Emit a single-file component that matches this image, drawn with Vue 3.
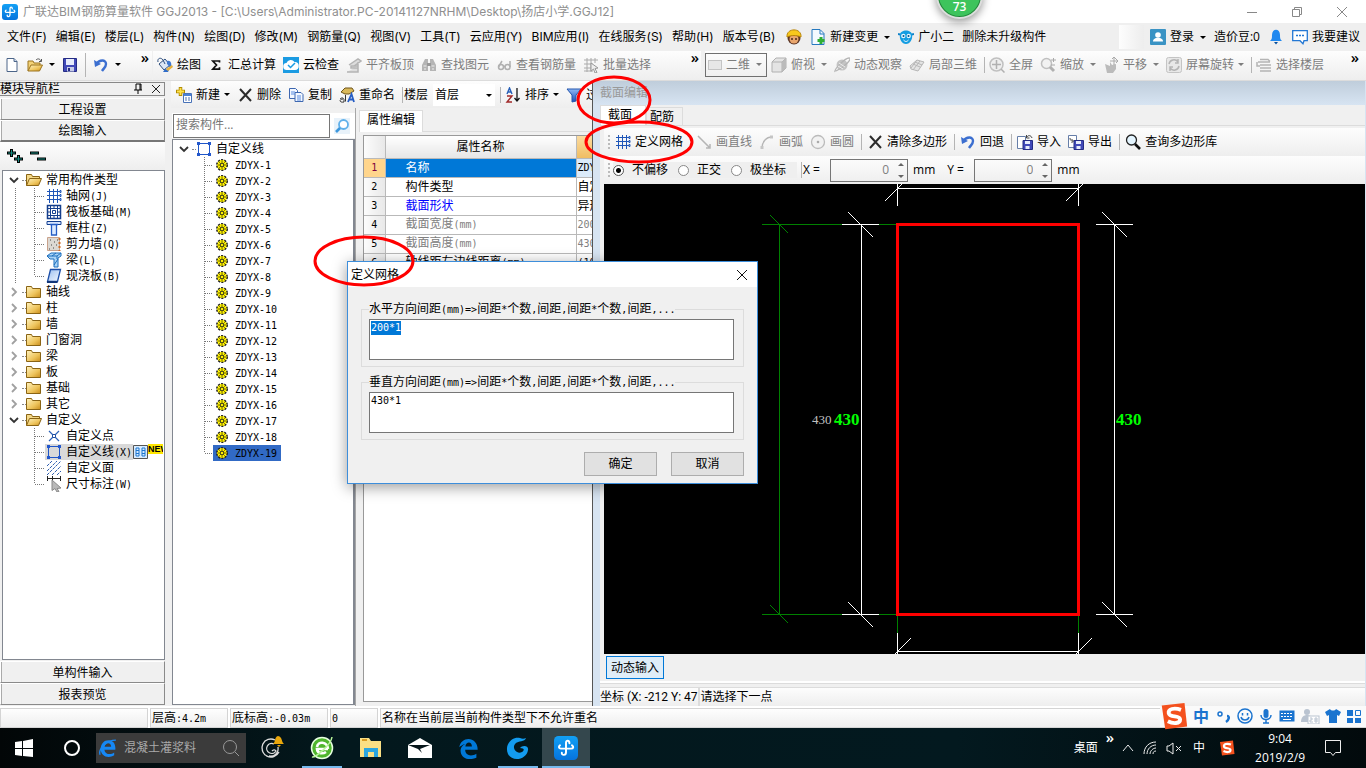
<script setup>
import { h, ref, onMounted } from 'vue'

const Ico = (p) => h('svg', { class: 'ico', 'aria-hidden': 'true', viewBox: '0 0 16 16' }, [h('use', { href: '#i-' + p.n })])
Ico.props = ['n']

// Half-width characters are set in a narrow monospace, full-width ones in the CJK face.
const Sim = (p) => h('span', { class: 'sim' }, (p.t.match(/[\x20-\x7e]+|[^\x20-\x7e]+/g) || []).map((s) =>
  /^[\x20-\x7e]/.test(s) ? h('span', { class: 'lat' }, s) : s))
Sim.props = ['t']

const menus = ['文件(F)', '编辑(E)', '楼层(L)', '构件(N)', '绘图(D)', '修改(M)', '钢筋量(Q)', '视图(V)', '工具(T)', '云应用(Y)', 'BIM应用(I)', '在线服务(S)', '帮助(H)', '版本号(B)']

const tools = [
  { i: 'bucket', t: '绘图' }, { i: 'sigma', t: '汇总计算' }, { i: 'cloud', t: '云检查' },
  { i: 'align', t: '平齐板顶', off: true }, { i: 'binoc', t: '查找图元', off: true },
  { i: 'glasses', t: '查看钢筋量', off: true }, { i: 'batch', t: '批量选择', off: true }
]
const views = [
  { i: 'cube', t: '俯视', a: 1 }, { i: 'planet', t: '动态观察' }, { i: 'local', t: '局部三维', s: 1 },
  { i: 'full', t: '全屏' }, { i: 'zoom', t: '缩放', a: 1 }, { i: 'pan', t: '平移', a: 1 },
  { i: 'rotate', t: '屏幕旋转', a: 2, s: 1 }, { i: 'floors', t: '选择楼层' }
]

const nav = [
  { t: '常用构件类型', open: true, kids: [
    { i: 'grid', t: '轴网(J)' }, { i: 'raft', t: '筏板基础(M)' }, { i: 'column', t: '框柱(Z)' },
    { i: 'wall', t: '剪力墙(Q)' }, { i: 'beam', t: '梁(L)' }, { i: 'slab', t: '现浇板(B)' }] },
  { t: '轴线' }, { t: '柱' }, { t: '墙' }, { t: '门窗洞' }, { t: '梁' }, { t: '板' }, { t: '基础' }, { t: '其它' },
  { t: '自定义', open: true, last: true, kids: [
    { i: 'point', t: '自定义点' }, { i: 'poly', t: '自定义线(X)', sel: true }, { i: 'hatch', t: '自定义面' }, { i: 'dim', t: '尺寸标注(W)' }] }
]

const props = [
  { n: '名称', v: 'ZDYX-19', c: 'cur' }, { n: '构件类型', v: '自定义线' }, { n: '截面形状', v: '异形', c: 'blue' },
  { n: '截面宽度(mm)', v: '200', c: 'dim' }, { n: '截面高度(mm)', v: '430', c: 'dim' }, { n: '轴线距左边线距离(mm)', v: '(100)' }
]

const offset = ref('none')
const hGap = ref('200*1')
const vGap = ref('430*1')
const first = ref(null)
onMounted(() => { first.value.focus({ preventScroll: true }); first.value.select() })
</script>

<template>
  <svg class="sprite" aria-hidden="true">
    <defs>
      <linearGradient id="gFold" x1="0" y1="0" x2="1" y2="1"><stop offset="0" stop-color="#fff3c0" /><stop offset=".6" stop-color="#eec45c" /><stop offset="1" stop-color="#c98d1c" /></linearGradient>
      <linearGradient id="gBlue" x1="0" y1="0" x2="0" y2="1"><stop offset="0" stop-color="#8fb8f5" /><stop offset="1" stop-color="#1c50b8" /></linearGradient>
      <linearGradient id="gSlab" x1="0" y1="0" x2="1" y2="1"><stop offset="0" stop-color="#9cc0f0" /><stop offset="1" stop-color="#f4f9ff" /></linearGradient>
      <linearGradient id="gApp" x1="0" y1="0" x2="0" y2="1"><stop offset="0" stop-color="#12a0f5" /><stop offset="1" stop-color="#0673dc" /></linearGradient>
    </defs>
    <symbol id="i-app" viewBox="0 0 16 16"><rect width="16" height="16" rx="3" fill="url(#gApp)" /><path d="M10.300 4.800C10.300 2.600 8 2.600 8 4.600v6.200c0 2.400-3 2.200-2.800.4M4 6.200c-1.200 1-.8 2.200.6 2.200h6.800c1.600 0 1.900-1.400.6-2.200" fill="none" stroke="#fff" stroke-width="1.300" stroke-linecap="round" /></symbol>
    <symbol id="i-new" viewBox="0 0 16 16"><path d="M3 1.500h7l3 3v10H3z" fill="#fff" stroke="#4c6589" /><path d="M10 1.500v3h3" fill="#cfdcf0" stroke="#4c6589" /></symbol>
    <symbol id="i-open" viewBox="0 0 16 16"><path d="M1 14V4h5l1 2h6v2" fill="#f3d277" stroke="#9b7420" /><path d="M1 14l3-6h11.500l-3 6z" fill="url(#gFold)" stroke="#9b7420" /><path d="M9 3c2-2 4-1 5 1M14.500 2v2.500H12" fill="none" stroke="#555" /></symbol>
    <symbol id="i-save" viewBox="0 0 16 16"><path d="M1.500 1.500h13v13h-13z" fill="#4149b8" stroke="#252c84" /><path d="M4 2h8v6H4z" fill="#e7ecfb" /><path d="M5 10h7v4.500H5z" fill="#c8cde6" /><path d="M6 11h2v3H6z" fill="#252c84" /></symbol>
    <symbol id="i-undo" viewBox="0 0 16 16"><path d="M4 6.500C6 3 13 2 13 7c0 3-2 4-4 7" fill="none" stroke="#3c6fd0" stroke-width="2.400" /><path d="M1 3l1 7 6-3z" fill="#3c6fd0" /></symbol>
    <symbol id="i-bucket" viewBox="0 0 16 16"><path d="M2 7l6-5 5 6-6 5z" fill="#dbe6f5" stroke="#30507f" /><path d="M1 5c-1-4 3-5 5-2l2 4" fill="none" stroke="#30507f" /><path d="M10 4c4-1 5 3 4 7-2 1-2-3-4-4z" fill="#3f78cf" /><path d="M6 15l2-3 4 1-1 2z" fill="#2f6cc9" /><path d="M9 12l6-4 1 2-5 4z" fill="#e8b23d" /></symbol>
    <symbol id="i-sigma" viewBox="0 0 16 16"><path d="M11.500 5.500V4H4.800l3.700 4-3.700 4.200h6.700v-2" fill="none" stroke="#111" stroke-width="1.700" /></symbol>
    <symbol id="i-cloud" viewBox="0 0 16 16"><rect width="16" height="16" fill="#1b9be2" /><path d="M4 13a3.500 3.500 0 0 1-.5-7 4.500 4.500 0 0 1 8-1 4 4 0 0 1 .5 8z" fill="#fff" /><path d="M5 8l2.500 2.500L12 6" fill="none" stroke="#1b9be2" stroke-width="1.500" /></symbol>
    <symbol id="i-align" viewBox="0 0 16 16"><path d="M1 15h11v-4H5V9h7M3 8l9-6 3 2-7 5M12 5v10" fill="#ddd" stroke="#b4b4b4" stroke-width="1.500" /></symbol>
    <symbol id="i-binoc" viewBox="0 0 16 16"><path d="M1 14V8l3-6h3v12zM15 14V8l-3-6H9v12z" fill="#b5b5b5" /><path d="M6 6h4v3H6z" fill="#999" /><path d="M2.500 9h3M10.500 9h3M3 12h2M11 12h2" stroke="#eee" /></symbol>
    <symbol id="i-glasses" viewBox="0 0 16 16"><g fill="none" stroke="#b0b0b0" stroke-width="1.500"><circle cx="5" cy="10" r="2.500" /><circle cx="11.500" cy="10" r="2.500" /><path d="M2.500 10L6 4M14 10V4M7.500 9.500h2" /></g></symbol>
    <symbol id="i-batch" viewBox="0 0 16 16"><path d="M1 3h14M1 7h9M1 11h9M1 14h9M4 1v14M8 1v14M12 1v5" stroke="#aaa" fill="none" /><path d="M8 6l7 5-3 .5 2 4-2 .5-1.500-4L8 14z" fill="#eee" stroke="#999" /></symbol>
    <symbol id="i-cube" viewBox="0 0 16 16"><path d="M1 5l4-4h10v10l-4 4H1z" fill="#e4e4e4" stroke="#b0b0b0" /><path d="M1 5h10v10M11 5l4-4" fill="none" stroke="#b0b0b0" /><path d="M11 5l4-4v10l-4 4z" fill="#bbb" /></symbol>
    <symbol id="i-planet" viewBox="0 0 16 16"><circle cx="8" cy="8" r="5.500" fill="#c4c4c4" /><path d="M1 15C0 12 11 1 15 1s-4 9-13 13" fill="none" stroke="#b4b4b4" stroke-width="1.300" /><path d="M5 6l6 4M4 9l5 3" stroke="#eee" /></symbol>
    <symbol id="i-local" viewBox="0 0 16 16"><g fill="#e4e4e4" stroke="#b6b6b6"><path d="M1 9l7-6 7 2-6 9-7-2z" /><path d="M4 7l7 3M6 5l7 3M4 13l7-9M8 3L2 11" fill="none" /></g></symbol>
    <symbol id="i-full" viewBox="0 0 16 16"><circle cx="7.500" cy="7.500" r="6.500" fill="#eee" stroke="#c0c0c0" stroke-width="1.500" /><path d="M3 7.500h9M7.500 3v9M12 12l3.500 3.500" stroke="#b0b0b0" stroke-width="1.500" /></symbol>
    <symbol id="i-zoom" viewBox="0 0 16 16"><circle cx="6.500" cy="6.500" r="5" fill="#f2f2f2" stroke="#c0c0c0" stroke-width="1.500" /><path d="M10 10l4 4" stroke="#b0b0b0" stroke-width="3" /><path d="M11 3h5M13.500 1v4M11 8h4" stroke="#aaa" /></symbol>
    <symbol id="i-pan" viewBox="0 0 16 16"><path d="M2 7l5 2V5l2 3 4-1v5l-3 4H4z" fill="#bbb" /><path d="M11 0v8M7 4h8M9 2l2-2 2 2M13 2l2 2-2 2" stroke="#aaa" fill="none" /></symbol>
    <symbol id="i-rotate" viewBox="0 0 16 16"><rect x=".5" y=".5" width="15" height="15" rx="2" fill="#e8e8e8" stroke="#c4c4c4" /><path d="M3 7a5 5 0 0 1 9-2M13 9a5 5 0 0 1-9 2M12 2v4H9M4 14v-4h3" fill="none" stroke="#b4b4b4" stroke-width="1.500" /></symbol>
    <symbol id="i-floors" viewBox="0 0 16 16"><path d="M4 2.500h8l2 2M2 5h12M4 8h11M4 11h11M4 14h11M1 5v4h3" fill="none" stroke="#b4b4b4" stroke-width="1.500" /></symbol>
    <symbol id="i-man" viewBox="0 0 16 16"><circle cx="8" cy="9" r="6.500" fill="#5c3525" /><circle cx="8" cy="10" r="4.500" fill="#e9a66d" /><path d="M1 8C0-1.500 16-1.500 15 8 11 6 5 6 1 8z" fill="#f8c81c" stroke="#b98508" /><path d="M6 9v2M10 9v2" stroke="#30180c" stroke-width="1.300" /></symbol>
    <symbol id="i-change" viewBox="0 0 16 16"><path d="M2 .5h8l4 4v11H2z" fill="#f4faff" stroke="#2679bf" /><path d="M10 1v4h4" fill="none" stroke="#2679bf" /><path d="M11 8v7M7.500 11.500h7" stroke="#2fae35" stroke-width="3" /></symbol>
    <symbol id="i-bot" viewBox="0 0 16 16"><path d="M0 5l4 1M16 5l-4 1" stroke="#0f82c9" stroke-width="2" /><path d="M2 6c0-6 12-6 12 0 1 4-2 9-6 9S1 10 2 6z" fill="#149de2" /><circle cx="5.300" cy="7" r="2.200" fill="#e3f7ff" /><circle cx="10.700" cy="7" r="2.200" fill="#e3f7ff" /><circle cx="5.500" cy="7" r="1" fill="#07538a" /><circle cx="10.500" cy="7" r="1" fill="#07538a" /><path d="M5.500 11c2 2 3 2 5 0" fill="none" stroke="#fff" /></symbol>
    <symbol id="i-user" viewBox="0 0 16 16"><rect width="16" height="16" rx="1" fill="#3a93c4" /><circle cx="8" cy="6" r="2.800" fill="#fff" /><path d="M3 12.500c0-5 10-5 10 0z" fill="#fff" /></symbol>
    <symbol id="i-bell" viewBox="0 0 16 16"><path d="M2 12c2-2 2-3 2-6 0-7 8-7 8 0 0 3 0 4 2 6z" fill="#2088ef" /><path d="M6 13h4l-2 2.500z" fill="#064f9e" /></symbol>
    <symbol id="i-chat" viewBox="0 0 16 16"><path d="M.7 1.700h14.600v10H12l-1 3-3-3H.7z" fill="#fff" stroke="#2478d4" stroke-width="1.300" /><path d="M4 6.500h8" stroke="#2478d4" stroke-width="1.500" stroke-dasharray="2 1" /></symbol>
    <symbol id="i-add" viewBox="0 0 16 16"><path d="M4.500 0v9M0 4.500h9" stroke="#b18b00" stroke-width="3.500" /><path d="M4.500 1v7M1 4.500h7" stroke="#ffe24b" stroke-width="1.800" /><path d="M7.500 6.500h8v9h-8z" fill="#fff" stroke="#4872b8" /><path d="M8 7h7v2H8z" fill="#4b82d8" /><path d="M9 11h2M12 11h2M9 13h2M12 13h2" stroke="#4872b8" /></symbol>
    <symbol id="i-x" viewBox="0 0 16 16"><path d="M3 2l11 12M14 2L3 14" stroke="#2c2c2c" stroke-width="2" /></symbol>
    <symbol id="i-copy" viewBox="0 0 16 16"><g fill="#f4f8ff" stroke="#3d67b0"><path d="M1.500 1.500h6l2 2v8h-8z" /><path d="M7 5.500h6l2 2v7H7z" /></g><path d="M3 5h4M3 7h4M9 9h4M9 11h4M9 13h4" stroke="#5b8de0" /></symbol>
    <symbol id="i-rename" viewBox="0 0 16 16"><path d="M2 5l4-4h7l2 3-5 3H6z" fill="#d9b85a" stroke="#6e541a" /><path d="M1 12c2-2 4-1 4 1v2c-5 1-5-3-1-3M6.500 8v6.500" fill="none" stroke="#333" /><path d="M9 15l3.500-8L15 15M10 12.500h4" fill="none" stroke="#245cc4" stroke-width="1.800" /></symbol>
    <symbol id="i-sort" viewBox="0 0 16 16"><path d="M2 7l2.500-6L7 7M3 5h3" fill="none" stroke="#2760b8" stroke-width="1.400" /><path d="M2 9h5l-5 6h5" fill="none" stroke="#a02828" stroke-width="1.400" /><path d="M12 1v13M9.500 11l2.500 3 2.500-3" fill="none" stroke="#111" stroke-width="1.300" /></symbol>
    <symbol id="i-filter" viewBox="0 0 16 16"><path d="M1 2h14l-5 6v6l-4 1V8z" fill="url(#gBlue)" stroke="#2456ae" /></symbol>
    <symbol id="i-find" viewBox="0 0 16 16"><circle cx="9.500" cy="6.500" r="4.500" fill="#fff" stroke="#5fb0ea" stroke-width="1.800" /><path d="M6 10l-4 4" stroke="#3d97dd" stroke-width="2.600" /></symbol>
    <symbol id="i-down" viewBox="0 0 16 16"><path d="M4 6l4 4 4-4" fill="none" stroke="#333" stroke-width="1.800" /></symbol>
    <symbol id="i-right" viewBox="0 0 16 16"><path d="M6 4l4 4-4 4" fill="none" stroke="#a0a0a0" stroke-width="1.800" /></symbol>
    <symbol id="i-folder" viewBox="0 0 16 16"><path d="M.5 13.500v-11h5l1 2h8v9z" fill="url(#gFold)" stroke="#8a6414" /></symbol>
    <symbol id="i-fopen" viewBox="0 0 16 16"><path d="M.5 13.500v-11h5l1 2h7v3" fill="#f4d888" stroke="#8a6414" /><path d="M.5 13.500l3-7h12l-3 7z" fill="url(#gFold)" stroke="#8a6414" /></symbol>
    <symbol id="i-grid" viewBox="0 0 16 16"><path d="M3.500 1v14M7.500 1v14M11.500 1v14M1 3.500h14M1 7.500h14M1 11.500h14" stroke="#1f56b8" fill="none" /><path d="M14 2.500h1v2h-1zM14 6.500h1v2h-1zM14 10.500h1v2h-1z" stroke="#1f56b8" fill="#fff" /></symbol>
    <symbol id="i-raft" viewBox="0 0 16 16"><path d="M1.500 1.500h13v13h-13z" fill="#fff" stroke="#153f8d" stroke-width="1.500" /><path d="M4.500 2v12M11.500 2v12M2 4.500h12M2 11.500h12M8 2v2M8 12v2M2 8h2M12 8h2" stroke="#153f8d" fill="none" /><path d="M6.500 6.500h3v3h-3z" fill="#fff" stroke="#153f8d" /></symbol>
    <symbol id="i-column" viewBox="0 0 16 16"><path d="M1 1.500h14v3H1z" fill="#d7e6ff" stroke="#123f91" /><path d="M4 4.500h8M5.500 5v10h5V5" fill="#dceaff" stroke="#245cc4" stroke-width="1.300" /></symbol>
    <symbol id="i-wall" viewBox="0 0 16 16"><path d="M1.500 1.500h12v13h-12z" fill="#dcd8d2" stroke="#c9a28c" /><path d="M4 4h1M8 6h1M5 9h1M10 9h1M7 12h1M3 13h1M11 4h1" stroke="#444" /><path d="M13.500 2v13" stroke="#d06e28" stroke-dasharray="2 2" stroke-width="2" /></symbol>
    <symbol id="i-beam" viewBox="0 0 16 16"><path d="M1 4l4-3h10v3l-3 2v9H8V7H4z" fill="#a9d4f7" stroke="#1d6fbd" /><path d="M1 4h10l4-3M11 4v3M6 4l4-3M8 13l4-6" fill="none" stroke="#1d6fbd" /></symbol>
    <symbol id="i-slab" viewBox="0 0 16 16"><path d="M4.500 1.500h10l-3 12h-10z" fill="url(#gSlab)" stroke="#1b4ea8" stroke-width="1.300" /><path d="M1 14h10.500" stroke="#123679" stroke-width="2" /></symbol>
    <symbol id="i-point" viewBox="0 0 16 16"><path d="M3 3l10 10M13 3L3 13" stroke="#2d63b8" stroke-width="1.200" /><path d="M6.500 6.500h3v3h-3z" fill="#fff" stroke="#1f4fa3" /></symbol>
    <symbol id="i-poly" viewBox="0 0 16 16"><path d="M2.500 2.500h11v11h-11z" fill="none" stroke="#1f56c8" /><path d="M1 1h3v3H1zM12 1h3v3h-3zM1 12h3v3H1zM12 12h3v3h-3z" fill="#2458cc" /></symbol>
    <symbol id="i-hatch" viewBox="0 0 16 16"><path d="M1 6l5-5M1 11L11 1M1 15L15 1M6 15l9-9M11 15l4-4" stroke="#2d5eb0" fill="none" stroke-dasharray="3 1" /></symbol>
    <symbol id="i-dim" viewBox="0 0 16 16"><path d="M1.500 0v5M6.500 0v5M14.500 0v5M1 2.500h14" stroke="#222" /><path d="M6 4l9 8-4 .5 2 3-2 .5-2-3.500-3 2z" fill="#b9b9b9" stroke="#8a8a8a" /></symbol>
    <symbol id="i-gear" viewBox="-2 -2 20 20"><circle cx="8" cy="8" r="6.500" fill="#fff200" stroke="#222" stroke-width="2" stroke-dasharray="2.600 1.500" /><circle cx="8" cy="8" r="5.500" fill="#fff200" /><path d="M8 3v10M3 8h10M4.500 4.500l7 7M11.500 4.500l-7 7" stroke="#4b4700" stroke-width="1" /><circle cx="8" cy="8" r="2.200" fill="#fff200" stroke="#222" /></symbol>
    <symbol id="i-line" viewBox="0 0 16 16"><path d="M2 2l12 12M14 10v4h-4" fill="none" stroke="#b5b5b5" stroke-width="1.500" /></symbol>
    <symbol id="i-arc" viewBox="0 0 16 16"><path d="M3 14C3 8 7 3 13 3" fill="none" stroke="#b5b5b5" stroke-width="1.300" /><path d="M11 1.500h3v3h-3zM1.500 12h3v3h-3z" fill="#c5c5c5" /></symbol>
    <symbol id="i-circle" viewBox="0 0 16 16"><circle cx="8" cy="8" r="6.500" fill="#f2f2f2" stroke="#bbb" stroke-width="1.300" /><circle cx="8" cy="8" r="1.300" fill="#aaa" /></symbol>
    <symbol id="i-import" viewBox="0 0 16 16"><path d="M.5 2.500h8v12h-8z" fill="#fff" stroke="#667ea8" /><path d="M6 6.500h9.500v9H6z" fill="#4149b8" stroke="#252c84" /><path d="M8 7h5v3H8zM8.500 12h4v3h-4z" fill="#e7ecfb" /><path d="M15 4c-1-3-4-3-5-1M9.500 1v3h3" fill="none" stroke="#444" /></symbol>
    <symbol id="i-export" viewBox="0 0 16 16"><path d="M.5 1.500h8v12h-8z" fill="#fff" stroke="#667ea8" /><path d="M6 6.500h9.500v9H6z" fill="#4149b8" stroke="#252c84" /><path d="M8 7h5v3H8zM8.500 12h4v3h-4z" fill="#e7ecfb" /><path d="M2 4c0 3 2 3 3 3M3.500 5L5.500 7l-2 2" fill="none" stroke="#444" /></symbol>
    <symbol id="i-mag" viewBox="0 0 16 16"><circle cx="6.500" cy="6" r="5" fill="#e4f5ff" stroke="#222" stroke-width="1.300" /><path d="M10 10l5 5" stroke="#111" stroke-width="2.600" /></symbol>
    <symbol id="i-e" viewBox="0 0 16 16"><path d="M14.500 9.500H4.800c.3 4.200 5.500 5 8.700 2.500v2.500C7.500 18 1.500 14.500 1.500 9 1.500 4 4.500 1 8.500 1c4.500 0 6.500 4 6 8.500zM5 6.800h5.800c0-4-5.300-4-5.800 0z" fill="currentColor" fill-rule="evenodd" /><path d="M1 14C-1 9 7 1 15 1" fill="none" stroke="currentColor" stroke-width="1.200" /></symbol>
    <symbol id="i-edge" viewBox="0 0 16 16"><path d="M1 7C2-1.500 15-2 15 9H5.500c0 5 5.500 5 8.500 3v3C7 18 1.500 14.500 2 9c.2-2 1.500-3.500 3.500-4.500C3.500 5 2 6 1 7zM5.600 6.500h5c0-4-4.500-4-5 0z" fill="currentColor" fill-rule="evenodd" /></symbol>
    <symbol id="i-sogou" viewBox="0 0 16 16"><path d="M1 2l13-1.500L15.500 14 3 15.500z" fill="#f4511e" /><path d="M12 4.500C8 3 4.500 4 5 6.500s6.500 1 6.500 3.500-4 2.500-7 1" fill="none" stroke="#fff" stroke-width="2.200" /></symbol>
  </svg>

  <div class="screen">
    <header class="titlebar">
      <Ico n="app" /><h1>广联达BIM钢筋算量软件 GGJ2013 - [C:\Users\Administrator.PC-20141127NRHM\Desktop\扬店小学.GGJ12]</h1>
      <div class="winbtns">
        <button aria-label="最小化"><svg width="12" height="12"><path d="M1 6.500h10" /></svg></button>
        <button aria-label="还原"><svg width="12" height="12"><path d="M1.500 3.500h7v7h-7zM3.500 3V1.500h7v7H9" /></svg></button>
        <button aria-label="关闭"><svg width="12" height="12"><path d="M1 1l10 10M11 1L1 11" /></svg></button>
      </div>
    </header>

    <nav class="menubar">
      <div class="menus">
        <button v-for="m in menus" :key="m">{{ m }}</button>
      </div>
      <button aria-label="助手"><Ico n="man" /></button>
      <button class="it"><Ico n="change" />新建变更<i class="arr"></i></button>
      <button class="it"><Ico n="bot" />广小二</button>
      <button>删除未升级构件</button>
      <span class="blank"></span>
      <div class="account">
        <button class="it"><Ico n="user" />登录<i class="arr"></i></button>
        <button>造价豆:0</button>
        <button aria-label="通知"><Ico n="bell" /></button>
        <button class="it"><Ico n="chat" />我要建议</button>
      </div>
    </nav>

    <div class="toolbar">
      <div class="group files">
        <button aria-label="新建"><Ico n="new" /></button>
        <button class="it" aria-label="打开"><Ico n="open" /><i class="arr"></i></button>
        <button aria-label="保存"><Ico n="save" /></button>
        <i class="sep"></i>
        <button class="it" aria-label="撤销"><Ico n="undo" /><i class="arr"></i></button>
        <span class="more">»</span>
      </div>
      <div class="group draw">
        <button v-for="t in tools" :key="t.t" class="it" :class="{ off: t.off }"><Ico :n="t.i" />{{ t.t }}</button>
        <span class="more">»</span>
      </div>
      <div class="group view">
        <button class="combo"><i class="plane"></i>二维<i class="arr"></i></button>
        <template v-for="t in views" :key="t.t">
          <button class="it off"><Ico :n="t.i" />{{ t.t }}<i v-if="t.a" class="arr" :class="{ tight: t.a === 2 }"></i></button>
          <i v-if="t.s" class="sep"></i>
        </template>
        <span class="more">»</span>
      </div>
    </div>

    <main class="work">
      <aside class="navpane">
        <div class="navhead"><span>模块导航栏</span>
          <svg width="10" height="12"><path d="M3 1h5v6M3 1v6M1 7h8M5 7v4M7 1v6" stroke="#000" fill="none" /></svg>
          <svg width="10" height="12"><path d="M1 2l8 8M9 2l-8 8" stroke="#222" fill="none" /></svg>
        </div>
        <button class="slab">工程设置</button>
        <button class="slab on">绘图输入</button>
        <div class="pm">
          <svg width="42" height="18" aria-hidden="true"><path d="M1 6h9M5.500 2v8M8 12h9M12.500 8v8M24 6h9M31 12h9" stroke="#000" stroke-width="3" /><path d="M2 6h7M5.500 3v6M9 12h7M12.500 9v6M25 6h7M32 12h7" stroke="#148a80" /></svg>
        </div>
        <ul class="tree nav">
          <li v-for="g in nav" :key="g.t">
            <div class="row"><Ico :n="g.open ? 'down' : 'right'" class="exp" /><i class="dash"></i><Ico :n="g.open ? 'fopen' : 'folder'" /><Sim class="lab" :t="g.t" /></div>
            <ul v-if="g.kids">
              <li v-for="(k, n) in g.kids" :key="k.t" class="row">
                <svg class="conn" width="42" height="16" aria-hidden="true"><path :d="(g.last ? '' : 'M12.500 0v16') + 'M31.500 0v' + (n === g.kids.length - 1 ? 8 : 16) + 'M32 8.500h10'" /></svg>
                <span class="leaf" :class="{ sel: k.sel }"><Ico :n="k.i" /><Sim :t="k.t" /></span>
                <template v-if="k.sel">
                  <svg width="15" height="14" aria-hidden="true"><path d="M.5.500h14v13H.5z" fill="#d8ecff" stroke="#555" /><path d="M3 3h3v8H3zM9 3h3v8H9zM3 5.500h3M3 8.500h3M9 5.500h3M9 8.500h3" fill="none" stroke="#1d76d0" /></svg>
                  <b class="new">NEW</b>
                </template>
              </li>
            </ul>
          </li>
        </ul>
        <button class="slab">单构件输入</button>
        <button class="slab">报表预览</button>
      </aside>

      <section class="center">
        <div class="cbar">
          <button class="it"><Ico n="add" />新建<i class="arr tight"></i></button>
          <button class="it"><Ico n="x" />删除</button>
          <button class="it"><Ico n="copy" />复制</button>
          <button class="it"><Ico n="rename" />重命名</button>
          <i class="sep"></i>
          <label for="floor">楼层</label>
          <span class="pick"><select id="floor"><option>首层</option></select><i class="arr"></i></span>
          <i class="sep"></i>
          <button class="it"><Ico n="sort" />排序<i class="arr tight"></i></button>
          <button class="it"><Ico n="filter" />过滤</button>
        </div>
        <div class="cols">
          <div class="comps">
            <div class="search"><input type="text" aria-label="搜索构件" placeholder="搜索构件..." /><button aria-label="搜索"><Ico n="find" /></button></div>
            <ul class="tree comp">
              <li class="row"><Ico n="down" class="exp" /><i class="dash"></i><Ico n="poly" /><span class="lab">自定义线</span></li>
              <li v-for="n in 19" :key="n" class="row">
                <svg class="conn" width="40" height="16" aria-hidden="true"><path :d="'M31.500 0v' + (n === 19 ? 8 : 16) + 'M32 8.500h8'" /></svg>
                <span class="leaf" :class="{ picked: n === 19 }"><Ico n="gear" /><Sim :t="'ZDYX-' + n" /></span>
              </li>
            </ul>
          </div>
          <div class="prop">
            <div class="tabs"><button class="tab">属性编辑</button></div>
            <div class="sheet">
              <table>
                <thead><tr><th></th><th>属性名称</th><th class="val"></th></tr></thead>
                <tbody><tr v-for="(p, i) in props" :key="p.n" :class="p.c"><th><Sim :t="String(i + 1)" /></th><td><Sim :t="p.n" /></td><td><Sim :t="p.v" /></td></tr></tbody>
              </table>
            </div>
          </div>
        </div>
      </section>

      <section class="editor">
        <div class="etitle">截面编辑</div>
        <div class="ebody">
          <div class="etabs"><button class="act">截面</button><button>配筋</button></div>
          <div class="ebar">
            <i class="grip"></i>
            <button class="it"><Ico n="grid" />定义网格</button>
            <button class="it off gapl"><Ico n="line" />画直线</button>
            <button class="it off"><Ico n="arc" />画弧</button>
            <button class="it off"><Ico n="circle" />画圆</button>
            <i class="sep"></i>
            <button class="it"><Ico n="x" />清除多边形</button>
            <i class="sep"></i>
            <button class="it"><Ico n="undo" />回退</button>
            <i class="sep"></i>
            <button class="it"><Ico n="import" />导入</button>
            <button class="it"><Ico n="export" />导出</button>
            <i class="sep"></i>
            <button class="it"><Ico n="mag" />查询多边形库</button>
          </div>
          <div class="ebar opts">
            <i class="grip"></i>
            <div class="radios">
              <label><input v-model="offset" type="radio" name="off" value="none" />不偏移</label>
              <label><input v-model="offset" type="radio" name="off" value="ortho" />正交</label>
              <label><input v-model="offset" type="radio" name="off" value="polar" />极坐标</label>
            </div>
            <i class="sep"></i>
            <label for="dx">X =</label>
            <span class="num"><input id="dx" type="number" value="0" disabled /><i></i></span><span class="unit">mm</span>
            <label for="dy">Y =</label>
            <span class="num"><input id="dy" type="number" value="0" disabled /><i></i></span><span class="unit">mm</span>
          </div>
          <div class="canvas">
            <svg width="100%" height="100%" shape-rendering="crispEdges">
              <g fill="none" stroke="#008000">
                <path d="M158 40.500h135M158 430.500h135M175.500 40v391M293.500 432v18M474.500 432v18" />
                <path d="M166 31l18 18M166 421l18 18" />
              </g>
              <g fill="none" stroke="#fff">
                <path d="M238 40.500h37M238 430.500h37M257.500 40v391M492 40.500h37M492 430.500h37M510.500 40v391" />
                <path d="M244 28l25 25M244 418l25 25M498 28l25 25M498 418l25 25" />
                <path d="M293 4.500h182M293.500 0v22M474.500 0v22M298 0l-17 17M479 0l-17 17" />
                <path d="M293 467.500h182M293.500 449v21M474.500 449v21M291 470l16-16M472 470l16-16" />
              </g>
              <rect x="293.500" y="40.500" width="181" height="390" fill="none" stroke="#f00" stroke-width="3" />
              <text x="208" y="240" class="t1">430</text>
              <text x="230" y="241" class="t2">430</text>
              <text x="512" y="241" class="t2">430</text>
            </svg>
          </div>
          <div class="dyn"><button>动态输入</button></div>
          <div class="estat"><span class="pos">坐标 (X: -212 Y: 47</span><span>请选择下一点</span></div>
        </div>
      </section>
    </main>

    <footer class="status">
      <span class="c1"></span><Sim class="c2" t="层高:4.2m" /><Sim class="c3" t="底标高:-0.03m" /><Sim class="c4" t="0" /><span class="c5">名称在当前层当前构件类型下不允许重名</span>
    </footer>

    <div class="taskbar">
      <button class="tb start" aria-label="开始"><svg width="18" height="18"><path d="M0 3l7-1v7H0zM8 2l10-2v9H8zM0 10h7v7l-7-1zM8 10h10v8L8 17z" fill="#fff" /></svg></button>
      <button class="tb cort" aria-label="Cortana"><svg width="18" height="18"><circle cx="9" cy="9" r="7" fill="none" stroke="#fff" stroke-width="2" /></svg></button>
      <label class="tsearch"><Ico n="e" /><input type="text" aria-label="搜索" placeholder="混凝土灌浆料" /><svg width="18" height="18"><circle cx="8" cy="8" r="6.500" fill="none" stroke="#999" /><path d="M13 13l4 4" stroke="#999" /></svg></label>
      <button class="tb" aria-label="G助手"><svg width="28" height="28"><g fill="none" stroke="#ddd" stroke-width="1.300"><path d="M16 6a9 9 0 1 0 4 12M15 10a5 5 0 1 0 2 7c-1-2-3-1-4 0M19 13c1 6-4 10-9 9M6 7c-4 4-4 10 0 14" /></g><path d="M14 10c3-2 1-7 5-8 5 1 3 6 6 8zM18 11h4l-2 2z" fill="#eaa80c" /></svg></button>
      <button class="tb run" aria-label="浏览器"><svg width="24" height="24"><circle cx="12" cy="12" r="10.500" fill="#4fb52d" stroke="#e7ffe0" stroke-width="1.500" /><path d="M18 13H7c.5 5 6 5 9 3M7 11c1-6 10-6 11 2" fill="none" stroke="#fff" stroke-width="2.600" /><path d="M2 21C5 22 21 9 22 1" fill="none" stroke="#b8f59b" stroke-width="1.500" /></svg></button>
      <button class="tb" aria-label="文件资源管理器"><svg width="24" height="22"><path d="M1 1h9l2 3h10v16H1z" fill="#fadf84" /><path d="M3 2h5v2H3z" fill="#d99c24" /><path d="M5 20v-9h14v9h-4v-5H9v5z" fill="#2ba5df" /></svg></button>
      <button class="tb" aria-label="邮件"><svg width="26" height="22"><path d="M1 8L13 1l12 7v13H1z" fill="#fff" /><path d="M1 8h22l-10 4 2 4-4-4z" fill="#06151a" /></svg></button>
      <button class="tb edge" aria-label="Edge"><Ico n="edge" /></button>
      <button class="tb run" aria-label="广联达G+"><svg width="24" height="24"><path d="M20 2c-1 4-8 3-10 5-5 4 0 12 6 9 3-2 2-4-2-4 2-3 9-3 8 2-1 9-15 13-20 4C-2 9 6 0 14 2c2 1 4 1 6 0z" fill="#139cf0" /></svg></button>
      <button class="tb run hot" aria-label="GGJ2013"><Ico n="app" /></button>
      <div class="tray">
        <span class="desk">桌面</span><span class="dmore">»</span>
        <svg width="12" height="12"><path d="M1 9l5-6 5 6" /></svg>
        <svg width="16" height="16"><path d="M2 14C2 7 7 2 14 2M5 14c0-5 4-9 9-9M8 14c0-3 3-6 6-6M11 14c0-2 1-3 3-3" /></svg>
        <svg width="16" height="16"><path d="M1 6h2l4-3v11l-4-3H1zM10 6l5 5M15 6l-5 5" /></svg>
        <span class="zh">中</span><Ico n="sogou" />
        <time>9:04<br />2019/2/9</time>
        <svg class="note" width="18" height="18"><path d="M1.500 1.500h15v12h-5l-2.500 3-2.500-3h-5z" /></svg>
      </div>
    </div>

    <div class="dialog" role="dialog" aria-labelledby="dt">
      <div class="dhead"><span id="dt">定义网格</span><button aria-label="关闭"><svg width="12" height="12"><path d="M1 1l10 10M11 1L1 11" stroke="#111" /></svg></button></div>
      <div class="dbody">
        <fieldset><legend><label for="hg"><Sim t="水平方向间距(mm)=>间距*个数,间距,间距*个数,间距,..." /></label></legend><textarea id="hg" ref="first" v-model="hGap" spellcheck="false"></textarea></fieldset>
        <fieldset><legend><label for="vg"><Sim t="垂直方向间距(mm)=>间距*个数,间距,间距*个数,间距,..." /></label></legend><textarea id="vg" v-model="vGap" spellcheck="false"></textarea></fieldset>
        <div class="dbtns"><button>确定</button><button>取消</button></div>
      </div>
    </div>

    <div class="ball">73</div>

    <div class="ime">
      <Ico n="sogou" class="slogo" /><b>中</b>
      <svg width="16" height="16"><circle cx="4" cy="6" r="2" fill="none" stroke="#1b74cf" stroke-width="1.500" /><path d="M11 8c3 0 2 4-1 6" fill="none" stroke="#1b74cf" stroke-width="2.500" /></svg>
      <svg width="16" height="16"><circle cx="8" cy="8" r="7" fill="none" stroke="#1b74cf" stroke-width="1.500" /><path d="M5.500 5v2.500M10.500 5v2.500M4 9c1 4 7 4 8 0" fill="none" stroke="#1b74cf" stroke-width="1.500" /></svg>
      <svg width="16" height="16"><rect x="5.500" y="1" width="5" height="9" rx="2.500" fill="#1b74cf" /><path d="M3 7c0 6 10 6 10 0M8 12v3M5 15h6" fill="none" stroke="#1b74cf" stroke-width="1.500" /></svg>
      <svg width="16" height="16"><path d="M.5 2.500h15v11H.5z" fill="#1b74cf" /><path d="M2 5.500h12M2 8.500h12" stroke="#fff" stroke-dasharray="2 1" /><path d="M4 11.500h8" stroke="#fff" /></svg>
      <svg width="20" height="16"><circle cx="7" cy="4" r="3" fill="#b9c3d0" /><path d="M1 14c0-9 10-8 11-4v4z" fill="#b9c3d0" /><rect x="8" y="8" width="11" height="8" fill="#fff" stroke="#b9c3d0" /><path d="M10 10h2v2h-2v2h3M15 10h2v4h-2zM15 12h2" fill="none" stroke="#b9c3d0" /></svg>
      <svg width="16" height="16"><path d="M5 1c1 2 5 2 6 0l5 3-2 4-2-1v8H4V7L2 8 0 4z" fill="#1b74cf" /></svg>
      <svg width="16" height="16"><path d="M1 2h6v6H1zM1 10h6v5H1zM9 10h6v5H9z" fill="#1b74cf" /><path d="M9.500 2.500h5v5h-5z" fill="none" stroke="#1b74cf" /></svg>
    </div>

    <svg class="mark m1" viewBox="0 0 78 52" aria-hidden="true"><ellipse cx="39" cy="26" rx="36" ry="23" /></svg>
    <svg class="mark m2" viewBox="0 0 110 46" aria-hidden="true"><ellipse cx="55" cy="23" rx="53" ry="20" /></svg>
    <svg class="mark m3" viewBox="0 0 104 54" aria-hidden="true"><ellipse cx="52" cy="27" rx="49" ry="24" /></svg>
  </div>
</template>

<style>
html, body { height: 100%; overflow: hidden; }
.ico { width: 16px; height: 16px; flex: none; display: block; }
.sim { white-space: nowrap; }
.lat { font-family: "DejaVu Sans Mono", monospace; font-size: 10px; }
</style>

<style scoped>
.sprite { position: absolute; width: 0; height: 0; }
.screen { position: relative; height: 100vh; display: flex; flex-direction: column; overflow: hidden; background: #f0f0f0; font: 12px/16px "Open Sans", "Noto Sans CJK SC", sans-serif; color: #000; white-space: nowrap; }
.screen * { box-sizing: border-box; }
button { font: inherit; color: inherit; background: none; border: 0; padding: 0; white-space: nowrap; }
input, select, textarea { font: inherit; color: inherit; margin: 0; }
ul { list-style: none; margin: 0; padding: 0; }
i { display: block; flex: none; }
.it { display: flex; align-items: center; gap: 4px; flex: none; }
.off { color: #7d7d7d; }
.arr { width: 0; height: 0; border: 3px solid transparent; border-top-color: currentColor; border-bottom: 0; margin-left: 2px; }
.arr.tight { margin-left: 0; }
.sep { width: 1px; height: 16px; background: #b4b4b4; }
.more { align-self: flex-start; font-size: 15px; line-height: 12px; font-weight: 600; margin-left: auto; color: #000; }

.titlebar { display: flex; align-items: center; height: 23px; flex: none; padding-left: 2px; gap: 5px; background: #fff; color: #8f8f8f; }
.titlebar h1 { font: 12px/16px Inter, "Noto Sans CJK SC", sans-serif; margin: 0; flex: 1; overflow: hidden; }
.winbtns { display: flex; padding-right: 2px; }
.winbtns button { width: 45px; height: 20px; display: grid; place-items: center; }
.winbtns path { fill: none; stroke: #888; }

.menubar { display: flex; align-items: center; height: 28px; flex: none; padding: 0 6px 0 7px; gap: 8px; background: #efefef; }
.menubar button { flex: none; }
.menus { display: flex; gap: 9px; font-family: Inter, "Noto Sans CJK SC", sans-serif; margin-right: 3px; }
.blank { margin-left: auto; width: 25px; height: 24px; background: linear-gradient(90deg, #fdfdfd, #ededed); margin-right: -2px; }
.account { display: flex; align-items: center; gap: 8px; }

.toolbar { display: flex; height: 29px; flex: none; background: #f0f0f0; }
.group { display: flex; align-items: center; background: linear-gradient(#fdfdfd, #eee); padding-bottom: 2px; }
.files { width: 152px; padding: 0 3px 2px 4px; gap: 7px; margin-right: 1px; }
.files .it { gap: 4px; }
.files .sep { height: 24px; }
.draw { width: 548px; padding: 0 2px 2px 4px; gap: 7px; margin-right: 4px; }
.view { flex: 1; padding-right: 7px; gap: 7px; }
.view .combo { margin-right: -3px; }
.view .sep { margin: 0 -3px 0 0; }
.combo { display: flex; align-items: center; width: 62px; height: 24px; border: 1px solid #707070; padding: 0 4px 0 2px; color: #7d7d7d; }
.plane { width: 14px; height: 10px; border: 1px solid #c4c4c4; background: #e7e7e7; margin-right: 4px; }
.combo .arr { margin-left: auto; }

.work { flex: 1; min-height: 0; display: grid; grid-template-columns: 171px 421px minmax(0, 1fr); border-top: 1px solid #dcdcdc; }
.navpane { margin-right: 5px; display: flex; flex-direction: column; padding: 1px 1px 1px 0; min-height: 0; }
.navhead { display: flex; align-items: center; gap: 8px; height: 14px; border: 1px solid #888; border-left: 0; padding-right: 3px; line-height: 12px; margin-bottom: 2px; flex: none; }
.navhead span { flex: 1; }
.slab { height: 22px; flex: none; border: 1px solid #fff; border-right-color: #8a8a8a; border-bottom: 1px solid #8a8a8a; background: #f0f0f0; box-shadow: inset 1px 0 #aaa; padding-top: 1px; }
.slab.on { border-bottom: 2px solid #777; }
.pm { height: 28px; flex: none; padding: 5px 6px; background: linear-gradient(#fdfdfd, #eee); }
.tree { background: #fff; border: 1px solid #828790; overflow: hidden; }
.tree.nav { flex: 1; min-height: 0; margin: 0 0 1px 2px; padding-top: 1px; }
.row { display: flex; align-items: center; height: 16px; }
.exp { margin-left: 3px; }
.dash { width: 4px; border-top: 1px dotted #888; }
.lab { margin-left: 4px; }
.conn { flex: none; }
.conn path { fill: none; stroke: #777; stroke-dasharray: 1 1; }
.leaf { display: flex; align-items: center; gap: 4px; height: 16px; padding-left: 1px; }
.leaf.sel { background: #d9d9d9; padding-right: 1px; }
.leaf.picked { background: #316ac5; }
.new { font: bold 9px/10px "Liberation Sans", sans-serif; background: #ffe600; align-self: flex-start; width: 15px; overflow: hidden; }

.center { display: flex; flex-direction: column; min-width: 0; min-height: 0; overflow: hidden; }
.cbar { display: flex; align-items: center; gap: 7px; height: 27px; flex: none; padding-left: 5px; background: linear-gradient(#fdfdfd, #eee); overflow: hidden; }
.cbar > * { flex: none; }
.cbar label { margin-left: -6px; }
.pick { position: relative; display: flex; width: 62px; height: 22px; background: #fff; margin-left: -2px; }
.cbar select { appearance: none; border: 0; background: transparent; width: 100%; padding: 0 2px; }
.pick .arr { position: absolute; right: 3px; top: 10px; }
.pick + .sep { margin: 0 -3px 0 -2px; }
.cols { flex: 1; min-height: 0; display: flex; }
.comps { width: 185px; flex: none; display: flex; flex-direction: column; padding: 5px 0 1px 1px; border-right: 1px solid #a6a6a6; }
.search { display: flex; align-items: center; height: 25px; flex: none; padding-left: 1px; gap: 4px; margin-bottom: 1px; background: #fff; }
.search input { width: 157px; height: 24px; border: 1px solid #767676; background: #fff; padding: 0 2px 2px; line-height: 16px; }
.search input::placeholder { color: #777; opacity: 1; }
.search button { background: #e8f2fa; }
.tree.comp { flex: 1; padding-top: 1px; border-right-width: 2px; }
.comp .leaf { padding-right: 4px; gap: 5px; }
.prop { flex: 1; min-width: 0; display: flex; flex-direction: column; padding: 2px 0 1px 3px; }
.tabs { display: flex; flex: none; height: 22px; border-bottom: 1px solid #dcdcdc; }
.tab { height: 22px; padding: 0 7px 4px; background: #fff; border: 1px solid #dcdcdc; border-bottom: 0; }
.sheet { flex: 1; min-height: 0; background: #fff; border: 1px solid #999; border-right: 0; margin: 3px 0 3px 4px; overflow: hidden; }
table { border-collapse: collapse; table-layout: fixed; width: 288px; }
th, td { font-weight: 400; height: 19px; padding: 0; border: 1px solid #b9b9b9; border-top: 0; line-height: 16px; overflow: hidden; }
th:first-child { width: 21px; border-left: 0; background: linear-gradient(90deg, #fcfcfc, #e8e8e8); }
th:nth-child(2) { width: 191px; }
thead th { height: 22px; background: linear-gradient(#fff, #e6e6e6); }
thead th.val { background: linear-gradient(#fbdba0, #f0bd62); }
td:nth-child(2) { padding-left: 20px; }
td:nth-child(3) { padding-left: 1px; }
.cur td:nth-child(2) { background: #0078d7; color: #fff; }
.cur td:nth-child(3) { background: #dbebfa; }
.cur th:first-child { background: #ffd58c; color: #800040; }
.blue td:nth-child(2) { color: #00f; }
.dim td { color: #808080; }

.editor { min-width: 0; min-height: 0; display: flex; flex-direction: column; border-left: 1px solid #555; background: #d7e4f2; padding-right: 1px; }
.etitle { height: 24px; flex: none; padding: 4px 7px 0; color: #999; background: linear-gradient(#bfcddb, #d7e4f2); overflow: hidden; }
.ebody { flex: 1; min-height: 0; margin-left: 7px; background: #f0f0f0; display: flex; flex-direction: column; }
.etabs { display: flex; align-items: flex-end; height: 21px; flex: none; border-bottom: 1px solid #dcdcdc; margin-bottom: 2px; }
.etabs button { height: 18px; border: 1px solid #dcdcdc; border-bottom: 0; padding: 0 8px 0 3px; }
.etabs .act { height: 20px; background: #fff; padding: 0 13px 2px 7px; }
.ebar { display: flex; align-items: center; gap: 7px; height: 28px; flex: none; margin-left: 4px; padding-left: 4px; background: linear-gradient(#fdfdfd, #eee); }
.ebar .sep { margin-right: -2px; }
.grip { width: 2px; height: 15px; background: repeating-linear-gradient(#bbb 0 2px, transparent 2px 4px); margin-right: -2px; }
.gapl { margin-left: 6px; }
.opts { gap: 4px; }
.opts .grip { margin-right: -1px; }
.radios { display: flex; gap: 10px; padding-right: 11px; background: #efefef; }
.radios label { display: flex; align-items: center; gap: 8px; }
.radios input { appearance: none; width: 11px; height: 11px; border: 1px solid #888; border-radius: 50%; background: #fff; }
.radios input:checked { background: radial-gradient(#000 0 2px, #fff 3px); border-color: #555; }
.opts .sep { margin-right: -3px; }
.opts > label { min-width: 23px; }
.num { position: relative; display: flex; }
.num input { width: 78px; height: 23px; border: 1px solid #767676; background: transparent; text-align: right; padding: 0 18px 2px 0; color: #808080; appearance: textfield; }
.num input::-webkit-inner-spin-button { display: none; }
.num i { position: absolute; right: 4px; top: 4px; width: 6px; height: 15px; }
.num i::before, .num i::after { content: ""; position: absolute; left: 0; border: 3px solid transparent; }
.num i::before { top: 0; border-bottom-color: #666; border-top: 0; }
.num i::after { bottom: 0; border-top-color: #666; border-bottom: 0; }
.unit { margin: 0 8px 0 1px; }
.canvas { flex: 1; min-height: 0; margin-left: 4px; background: #000; overflow: hidden; }
.canvas svg { display: block; }
.t1 { font: 13px "Liberation Serif", serif; fill: #c0c0c0; }
.t2 { font: bold 17px "Liberation Serif", serif; fill: #0f0; }
.dyn { height: 29px; flex: none; padding: 2px 6px; border-bottom: 2px solid #fff; }
.dyn button { height: 23px; padding: 0 4px; background: #dfedf8; border: 1px solid #0078d7; }
.estat { height: 23px; flex: none; display: flex; border-top: 1px solid #dcdcdc; padding-top: 3px; font-family: Roboto, "Noto Sans CJK SC", sans-serif; }
.estat span { flex: 1; border: 1px solid #dcdcdc; border-width: 1px 0 0 1px; background: linear-gradient(#fdfdfd, #eee); padding: 1px; }
.estat .pos { flex: none; padding: 1px 0; border-width: 1px 1px 0 0; }

.status { display: flex; gap: 2px; height: 22px; flex: none; padding-top: 2px; background: #fff; line-height: 18px; }
.status > * { border: 1px solid #d4d4d4; background: linear-gradient(#fefefe, #eee); padding: 0 1px; }
.c1 { width: 148px; }
.c2 { width: 78px; }
.c3 { width: 98px; }
.c4 { width: 48px; }
.c5 { flex: 1; }

.taskbar { display: flex; height: 40px; flex: none; background: linear-gradient(90deg, #020607, #03181d 25%, #03191f 70%, #020a0c); color: #fff; }
.tb { width: 49px; display: grid; place-items: center; flex: none; }
.start, .cort { width: 48px; }
.tsearch { display: flex; align-items: center; width: 150px; height: 30px; margin: 5px 2px 0 0; background: #3b3b3b; padding: 0 6px 0 3px; }
.tsearch .ico { width: 18px; height: 18px; color: #1688f5; }
.tsearch input { width: 100px; border: 0; background: transparent; padding: 0 7px; flex: 1; min-width: 0; }
.tsearch input::placeholder { color: #aaa; opacity: 1; }
.run { background: linear-gradient(#76b9ed, #76b9ed) center bottom / 40px 2px no-repeat; }
.hot { background-color: #34474d; background-size: 100% 2px; width: 48px; }
.hot .ico { width: 24px; height: 24px; }
.edge { color: #0078d7; }
.edge .ico { width: 21px; height: 21px; }
.tray { margin-left: auto; display: flex; align-items: center; padding-right: 24px; gap: 8px; }
.tray svg:not(.ico) { fill: none; stroke: #eee; }
.tray .dmore { align-self: flex-start; font-size: 15px; line-height: 18px; font-weight: 600; }
.tray .ico { margin-left: 6px; }
.tray .zh { margin-left: 3px; }
.tray time { line-height: 19px; text-align: center; padding: 0 14px 0 12px; }
.tray .note { margin-left: -3px; }

.dialog { position: absolute; left: 347px; top: 261px; width: 411px; height: 223px; border: 1px solid #3d8edb; background: #f0f0f0; box-shadow: 0 3px 14px rgba(0, 0, 0, .4); }
.dhead { display: flex; align-items: center; justify-content: space-between; height: 25px; background: #fff; padding: 0 9px 0 3px; }
.dhead button { display: grid; }
.dbody { padding: 14px 13px 0; }
fieldset { margin: 0 0 7px; padding: 0 9px 6px 7px; border: 1px solid #dcdcdc; min-width: 0; }
legend { padding: 0; line-height: 16px; }
textarea { display: block; width: 100%; height: 41px; margin-top: 1px; resize: none; outline: 0; border: 1px solid #767676; border-radius: 0; background: #fff; padding: 1px; font: 10px/14px "DejaVu Sans Mono", monospace; }
textarea::selection { background: #0078d7; color: #fff; }
.dbtns { display: flex; justify-content: flex-end; gap: 14px; padding: 5px 0; }
.dbtns button { width: 73px; height: 24px; background: #e1e1e1; border: 1px solid #adadad; }

.ball { position: absolute; left: 936px; top: -28px; width: 47px; height: 47px; border-radius: 50%; background: #3dc45c; border: 2px solid #ddd; box-shadow: inset 0 0 0 1px #26803c, 0 3px 9px rgba(0, 0, 0, .4); color: #fff; text-align: center; padding-top: 25px; font-weight: 600; }
.ime { position: absolute; right: 0; bottom: 38px; display: flex; align-items: center; gap: 5px; padding-right: 4px; color: #1b74cf; background: linear-gradient(transparent 4px, #fafafa 4px 25px, transparent 25px); }
.ime b { font-size: 16px; width: 18px; }
.ime .slogo { width: 28px; height: 28px; }
.mark { position: absolute; fill: none; stroke: #f00; stroke-width: 3; pointer-events: none; }
.m1 { left: 575px; top: 74px; width: 78px; height: 52px; }
.m2 { left: 584px; top: 119px; width: 110px; height: 46px; }
.m3 { left: 312px; top: 234px; width: 104px; height: 54px; }
</style>
